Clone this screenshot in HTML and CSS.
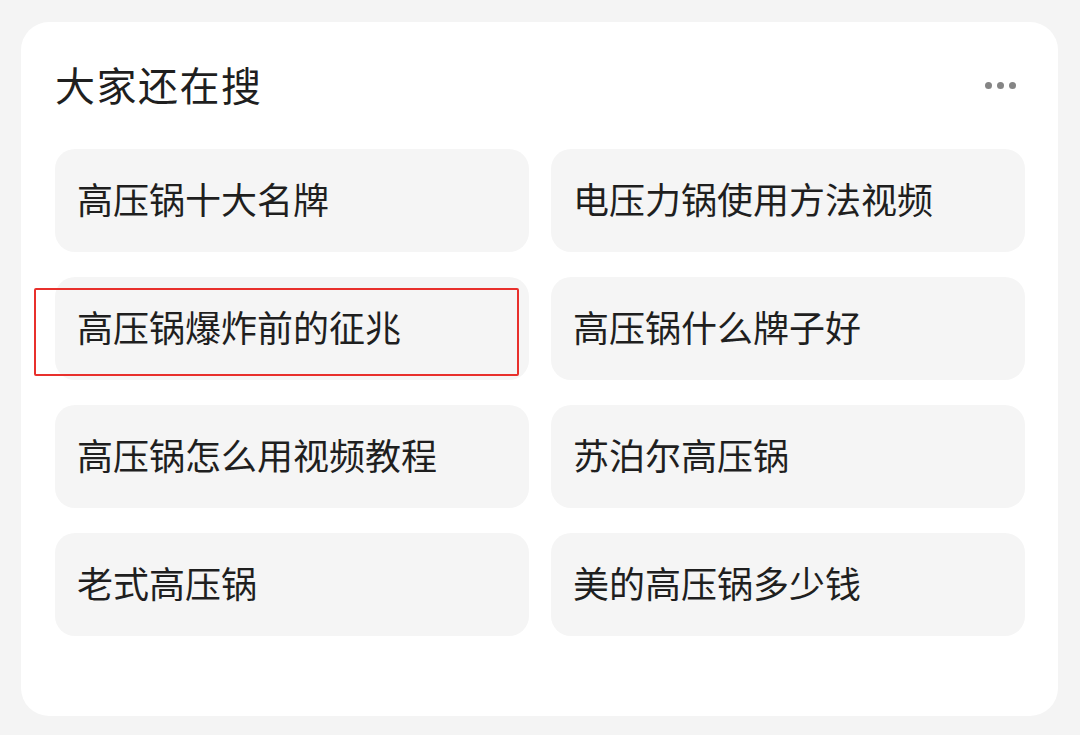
FILE: index.html
```html
<!DOCTYPE html>
<html>
<head>
    <meta charset="utf-8">
    <title>大家还在搜</title>
    <link rel="stylesheet" href="styles.css">
</head>
<body>
    <div class="card">
        <div class="card-header">
            <h2 class="title">大家还在搜</h2>
            <div class="more">
                <span class="dot"></span><span class="dot"></span><span class="dot"></span>
            </div>
        </div>

        <!-- Related searches -->
        <div class="grid">
            <div class="chip">高压锅十大名牌</div>
            <div class="chip">电压力锅使用方法视频</div>
            <div class="chip marked">高压锅爆炸前的征兆<span class="mark"></span></div>
            <div class="chip">高压锅什么牌子好</div>
            <div class="chip">高压锅怎么用视频教程</div>
            <div class="chip">苏泊尔高压锅</div>
            <div class="chip">老式高压锅</div>
            <div class="chip">美的高压锅多少钱</div>
        </div>
    </div>
</body>
</html>
```

FILE: styles.css
```css
body {
    margin: 0;
    padding: 22px 22px 19px 21px;
    background-color: #f4f4f4;
    font-family: "Noto Sans CJK SC", "Noto Sans", sans-serif;
    color: #1f1f1f;
}
.card {
    background: #fff;
    border-radius: 28px;
    height: 694px;
    box-sizing: border-box;
    padding: 40px 33px 0 34px;
}
.card-header {
    display: flex;
    align-items: center;
    justify-content: space-between;
    height: 44px;
    margin-bottom: 43px;
}
.title {
    margin: 0;
    font-size: 40px;
    font-weight: normal;
    line-height: 44px;
    letter-spacing: 1.5px;
}
.more {
    display: flex;
    gap: 5px;
    margin-right: 9px;
    margin-top: 2px;
}
.dot {
    width: 7px;
    height: 7px;
    border-radius: 50%;
    background: #858585;
}
.grid {
    display: grid;
    grid-template-columns: 474px 474px;
    grid-auto-rows: 103px;
    column-gap: 22px;
    row-gap: 25px;
}
.chip {
    position: relative;
    display: flex;
    align-items: center;
    padding-left: 22px;
    padding-bottom: 5px;
    box-sizing: border-box;
    background: #f5f5f5;
    border-radius: 20px;
    font-size: 36px;
}
.mark {
    position: absolute;
    left: -21px;
    top: 11px;
    width: 485px;
    height: 88px;
    box-sizing: border-box;
    border: 2px solid #e8302c;
    border-radius: 2px;
}
```
